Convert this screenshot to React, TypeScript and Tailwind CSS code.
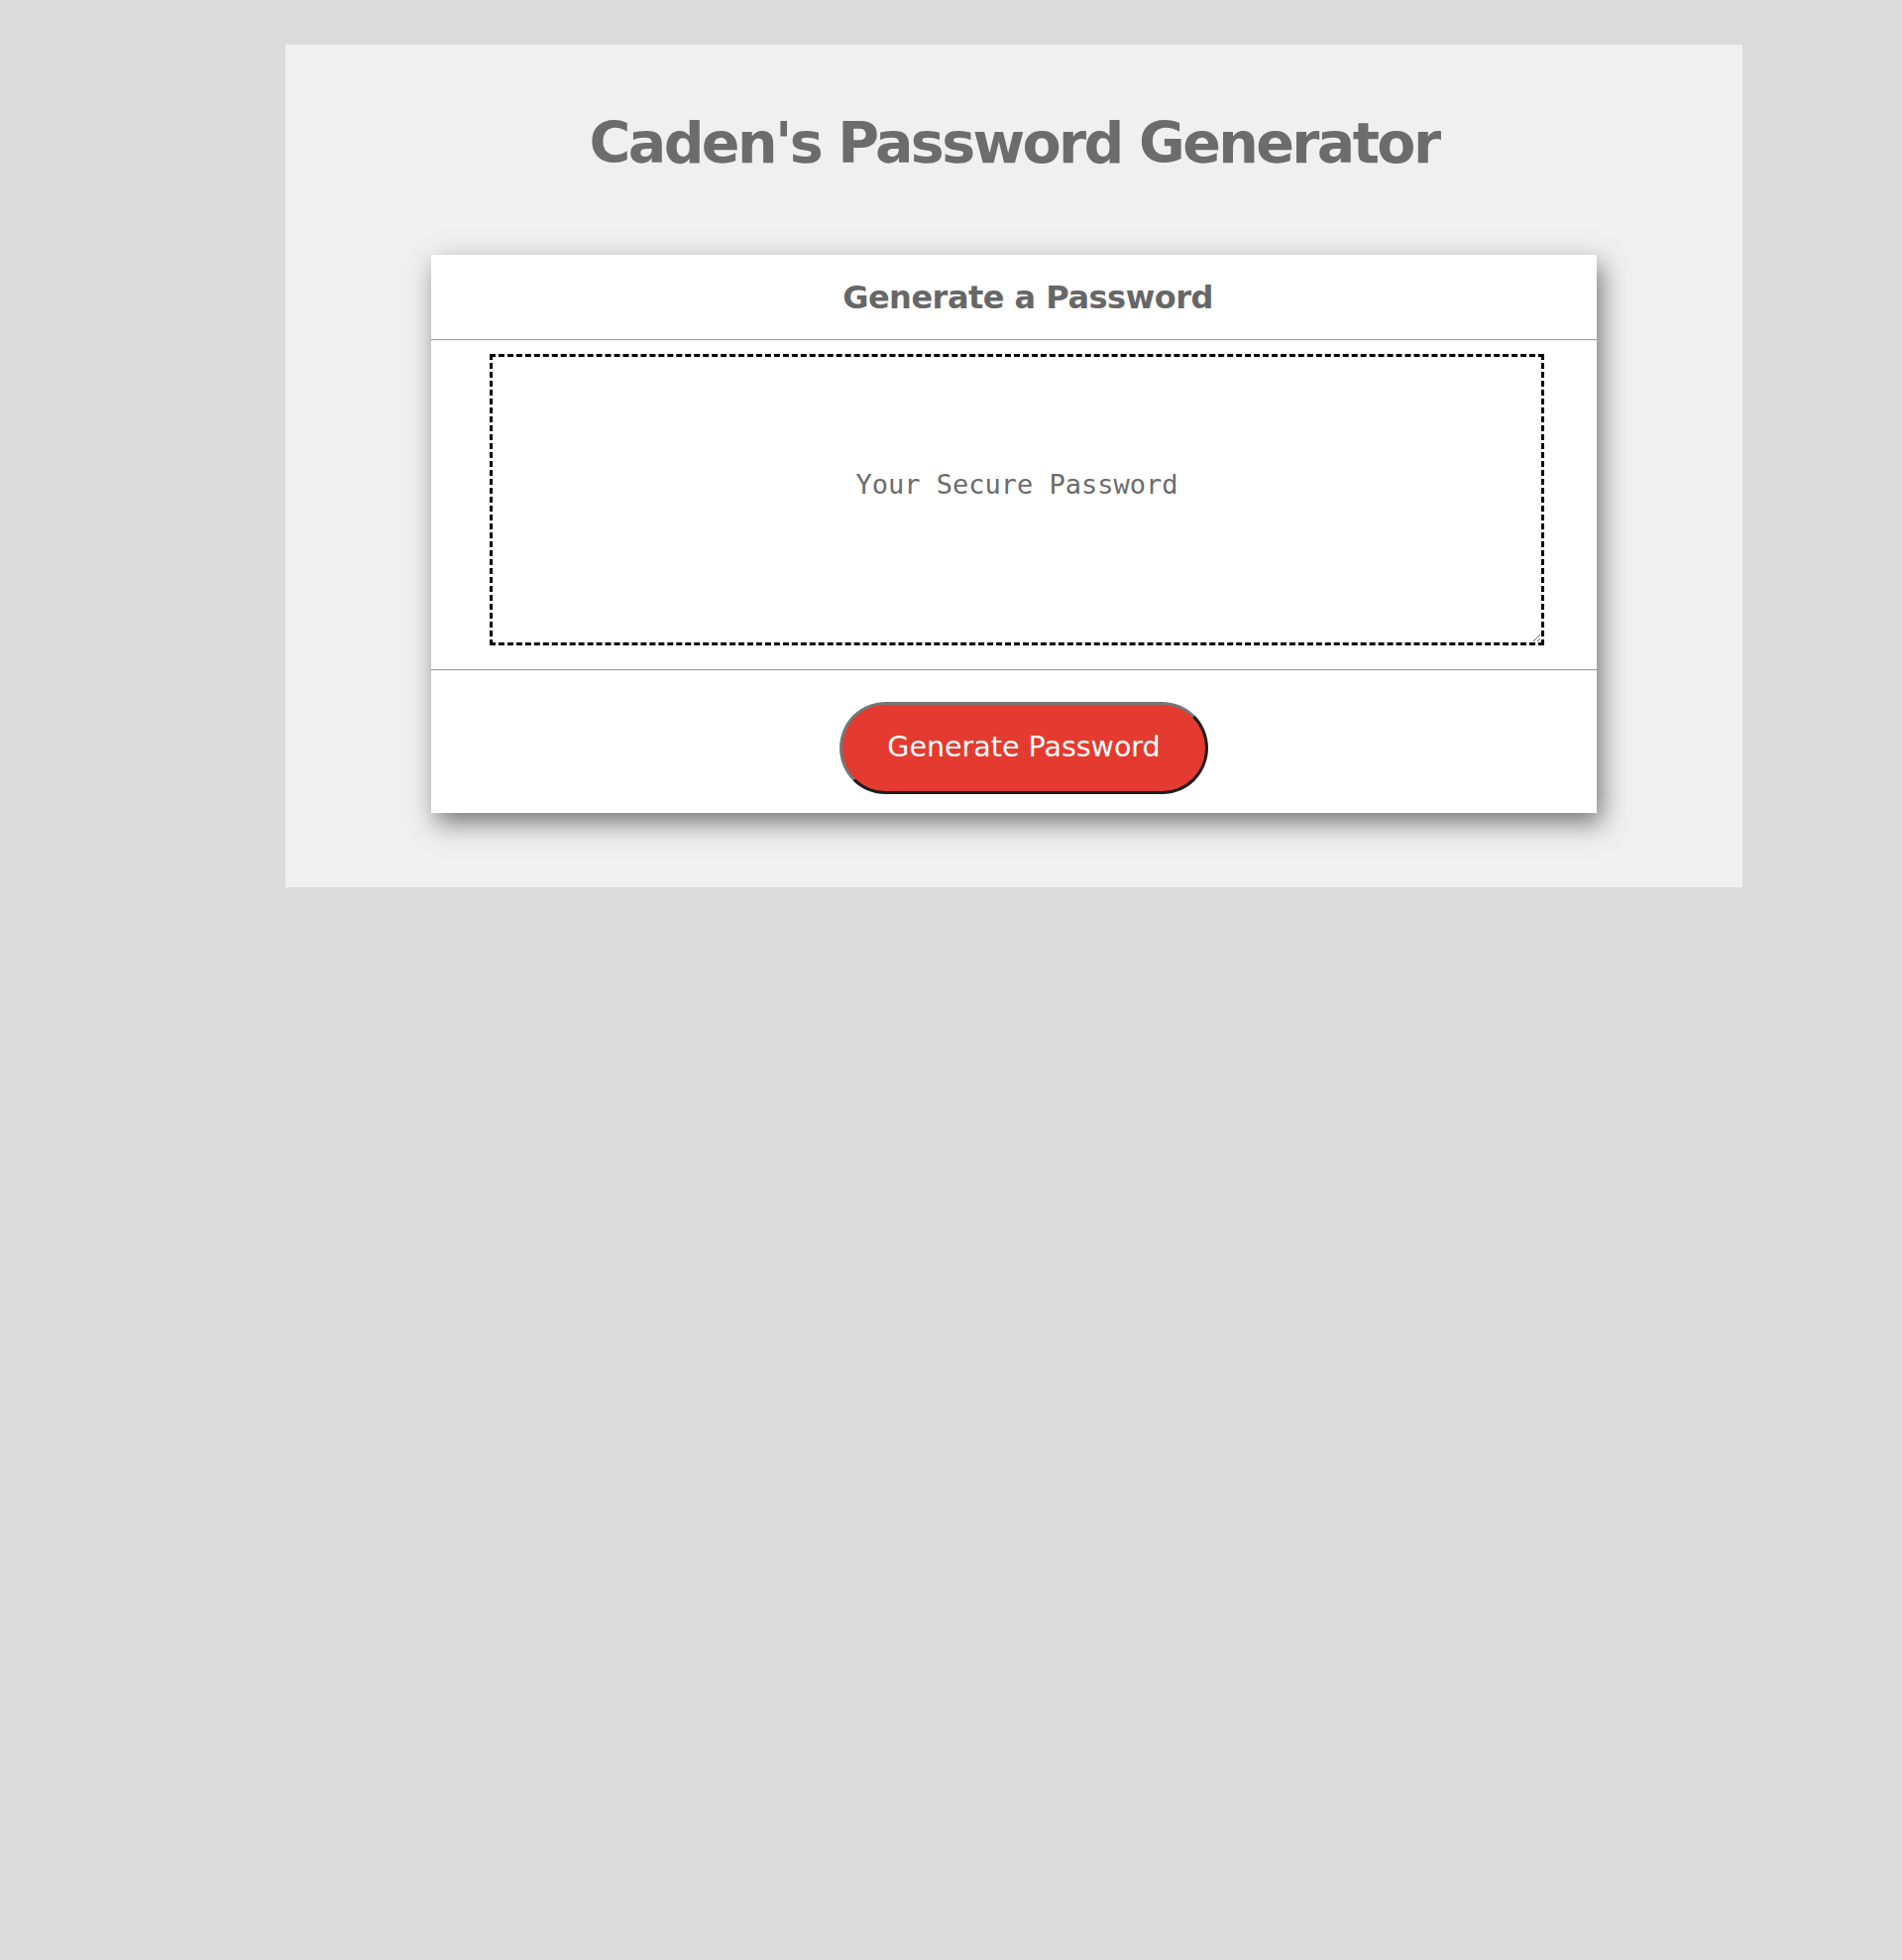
import React from "react";

export default function App() {
  return (
    <div className="min-h-screen w-full bg-[#dcdbdb] pt-[45px]">
      <div className="ml-[288px] w-[1470px] h-[850px] bg-[#f0f0f0] pt-[67px]">
        <h1 className="text-center font-['DejaVu_Sans',sans-serif] font-bold text-[57px] leading-[64px] tracking-[-2.6px] text-[#6c6c6c]">
          Caden's Password Generator
        </h1>
        <div className="mt-[81px] ml-[147px] w-[1176px] bg-white shadow-[5px_10px_24px_rgba(0,0,0,0.5)]">
          <div className="h-[85px] flex items-center justify-center pl-[28px]">
            <h2 className="font-['DejaVu_Sans',sans-serif] font-bold text-[32px] tracking-[-0.5px] text-[#676767]">
              Generate a Password
            </h2>
          </div>
          <div className="h-[2px] border-t border-t-[#a0a0a0] border-b border-b-[#eeeeee]" />
          <div className="pt-[13px] pb-[24px] pl-[59px]">
            <textarea
              readOnly
              placeholder="Your Secure Password"
              className="block w-[1064px] h-[294px] border-[3px] border-dashed border-black pt-[113px] text-center font-['DejaVu_Sans_Mono',monospace] text-[27px] leading-[32px] text-[#6b6b6b] placeholder:text-[#6b6b6b] outline-none resize"
            />
          </div>
          <div className="h-[2px] border-t border-t-[#a0a0a0] border-b border-b-[#eeeeee]" />
          <div className="pt-[31px] pb-[19px] flex justify-center pl-[20px]">
            <button className="w-[372px] h-[93px] rounded-full bg-[#e43a2f] border-[3px] border-t-[#767676] border-l-[#767676] border-r-[#1e1e1e] border-b-[#1e1e1e] text-white font-['DejaVu_Sans',sans-serif] text-[28.5px]">
              Generate Password
            </button>
          </div>
        </div>
      </div>
    </div>
  );
}
